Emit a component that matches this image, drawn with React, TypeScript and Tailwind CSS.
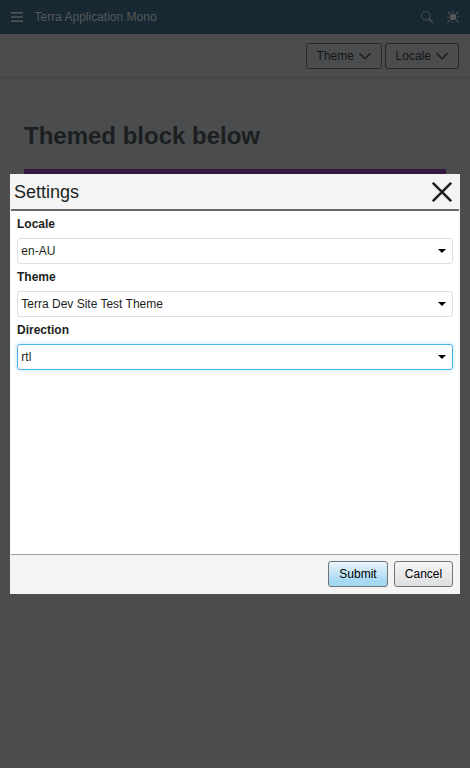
import React from 'react';

function Chevron() {
  return (
    <svg className="ml-[5px] h-3 w-3" viewBox="0 0 12 12" fill="none" stroke="#1c1f21" strokeWidth="1.6">
      <path d="M.5 3.300 6 8.700l5.500-5.400" />
    </svg>
  );
}

function MenuButton({ label, width }: { label: string; width: string }) {
  return (
    <button className={`flex h-[26px] items-center rounded-[3px] border border-[#26292b] pl-[9.6px] text-xs text-[#131618] ${width}`}>
      {label}
      <Chevron />
    </button>
  );
}

function Field({ label, value, focused }: { label: string; value: string; focused?: boolean }) {
  return (
    <div className="h-[53px] pt-1">
      <div className="h-[23px] text-xs leading-[18px] font-bold text-[#1c1f21]">{label}</div>
      <div
        className={`flex h-[26px] items-center justify-between rounded-[3px] border bg-white pr-[6px] pl-[3.3px] text-xs text-[#1c1f21] ${
          focused ? 'border-[#4cb2e9] shadow-[0_0_4px_#4cb2e966]' : 'border-[#dedfe0]'
        }`}
      >
        {value}
        <svg className="h-1 w-2" viewBox="0 0 8 4">
          <path d="M0 0h8L4 4z" fill="#000" />
        </svg>
      </div>
    </div>
  );
}

export default function App() {
  return (
    <div className="relative h-[768px] w-[470px] overflow-hidden bg-[#4b4c4d] font-['Liberation_Sans',Arial,sans-serif]">
      <header className="flex h-[34px] items-center bg-[#182832] pr-[11px] pl-[11px] text-[#54585b]">
        <svg className="h-3 w-3" viewBox="0 0 12 12" fill="currentColor">
          <path d="M0 1h12v1.500H0zM0 5.200h12v1.500H0zM0 9.400h12v1.500H0z" />
        </svg>
        <span className="ml-[11.500px] flex-1 text-xs">Terra Application Mono</span>
        <svg className="h-3 w-3" viewBox="0 0 12 12" fill="none" stroke="currentColor">
          <circle cx="4.800" cy="4.800" r="4.300" strokeWidth="0.8" />
          <path d="m7.800 7.800 3.900 3.900" strokeWidth="1.300" />
        </svg>
        <svg className="ml-[14px] h-3 w-3" viewBox="0 0 12 12" fill="currentColor" stroke="currentColor">
          <rect x="2.900" y="2.900" width="6.200" height="6.200" rx="2" stroke="none" />
          <path d="M5.500 0v1.800M5.500 10.200V12M0 6h1.800M10.200 6H12M.6.6l2.800 2.800M11.400.6 8.600 3.400M.6 11.400l2.800-2.800M11.400 11.400 8.600 8.600" strokeWidth="1.100" />
        </svg>
      </header>
      <nav className="flex h-11 items-center justify-end gap-[3px] border-b border-[#414344] pr-[11px]">
        <MenuButton label="Theme" width="w-[76px]" />
        <MenuButton label="Locale" width="w-[74px]" />
      </nav>
      <main className="px-6 pt-11">
        <h1 className="text-2xl leading-7 font-bold text-[#1c1f21]">Themed block below</h1>
        <div className="mt-[19px] h-10 bg-[#341842]" />
      </main>

      <section className="absolute top-[174px] left-[10px] flex h-[420px] w-[450px] flex-col border border-[#f4f4f4] bg-white">
        <div className="flex h-9 items-center justify-between border-b-2 border-[#64696c] bg-[#f4f4f4] pr-[7px] pl-[3px]">
          <h2 className="text-lg leading-6 text-[#1c1f21]">Settings</h2>
          <svg className="h-5 w-5" viewBox="0 0 20 20" fill="none" stroke="#1c1f21" strokeWidth="2.500">
            <path d="m.8.8 18.400 18.400M19.200.8.8 19.200" />
          </svg>
        </div>
        <div className="flex-1 px-[6px]">
          <Field label="Locale" value="en-AU" />
          <Field label="Theme" value="Terra Dev Site Test Theme" />
          <Field label="Direction" value="rtl" focused />
        </div>
        <div className="flex h-[39px] items-start justify-end gap-[6px] border-t border-[#9b9fa1] bg-[#f4f4f4] pt-[6px] pr-[6px] text-xs text-black">
          <button className="h-[26px] w-[60px] rounded-[3px] border border-[#6f7477] bg-linear-to-b from-[#ebf6fd] to-[#a5d8f3] to-80%">Submit</button>
          <button className="h-[26px] w-[59px] rounded-[3px] border border-[#6f7477] bg-linear-to-b from-[#f4f4f4] to-[#dedfe0]">Cancel</button>
        </div>
      </section>
    </div>
  );
}
